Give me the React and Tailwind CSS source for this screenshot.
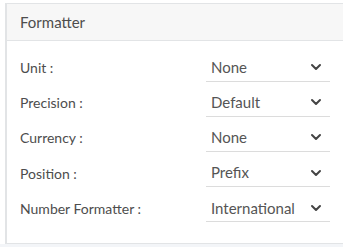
import { ChevronDown } from "lucide-react"

const rows = [
  { label: "Unit :", value: "None" },
  { label: "Precision :", value: "Default" },
  { label: "Currency :", value: "None" },
  { label: "Position :", value: "Prefix" },
  { label: "Number Formatter :", value: "International" },
]

export default function App() {
  return (
    <div className="w-[343px] h-[247px] overflow-hidden bg-[#f3f5f8] font-['Lato',sans-serif] text-[#4d4d4d]">
      <div className="bg-white pl-[5px] pt-[3px]">
        <div className="border-l-2 border-t border-b border-[#e2e4e6] bg-white w-[360px]">
          <div className="h-[37px] flex items-center px-[13px] bg-[#f7f7f7] border-b border-[#e2e4e6] text-[15px]">
            Formatter
          </div>
          <div className="pt-[9px] pb-[17px]">
            {rows.map((r) => (
              <div key={r.label} className="flex items-center h-[35.2px] pl-[13px]">
                <span className="w-[186px] text-[14px]">{r.label}</span>
                <div className="w-[124px] h-[28px] flex items-center justify-between pl-[5px] pr-[6px] border-b border-[#dcdcdc] text-[15px] text-[#555]">
                  <span>{r.value}</span>
                  <ChevronDown size={16} strokeWidth={3} className="text-[#444]" />
                </div>
              </div>
            ))}
          </div>
        </div>
      </div>
    </div>
  )
}
